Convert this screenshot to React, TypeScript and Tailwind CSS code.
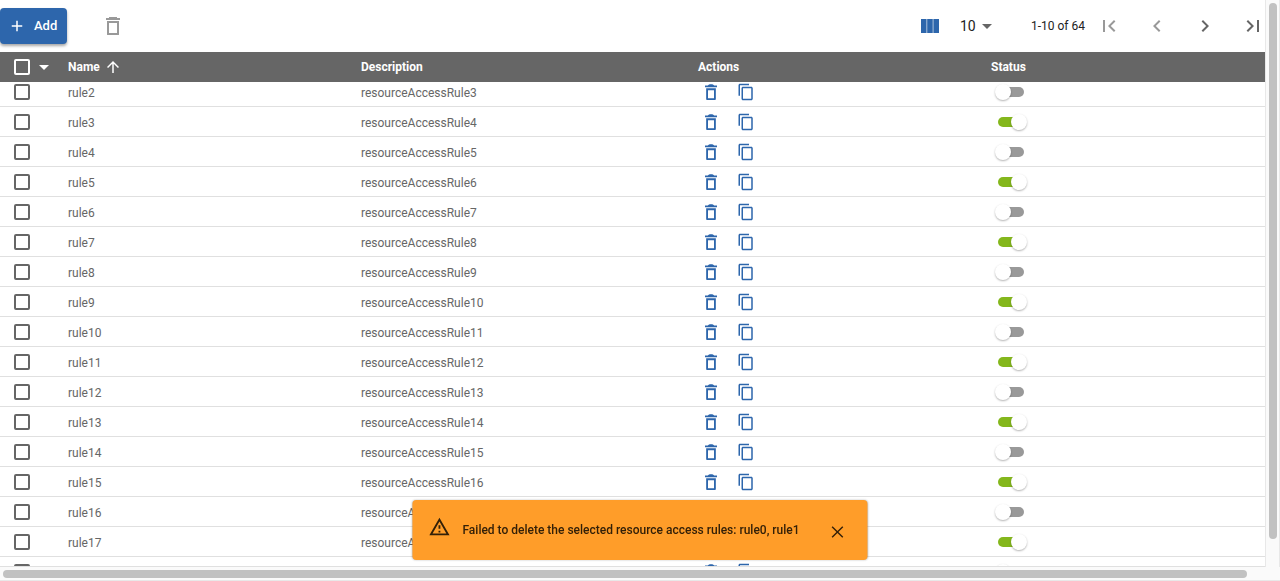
import { useLayoutEffect, useRef, useState } from "react";

const rules = Array.from({ length: 17 }, (_, i) => ({
  name: `rule${i + 2}`,
  description: `resourceAccessRule${i + 3}`,
  enabled: i % 2 === 1,
}));

function Icon({ d, className }: { d: string; className: string }) {
  return (
    <svg
      viewBox="0 0 24 24"
      fill="currentColor"
      fillRule="evenodd"
      aria-hidden="true"
      className={className}
    >
      <path d={d} />
    </svg>
  );
}

const icons = {
  add: "M19 13h-6v6h-2v-6H5v-2h6V5h2v6h6v2z",
  trash:
    "M6 20.4c0 .3.3.6.6.6h10.8c.3 0 .6-.3.6-.6V7H6zM8 9h8v10H8zM16 4V3H8v1H5v2h14V4z",
  trashSmall:
    "M6.2 7.6v12.8c0 .6.5 1.2 1.1 1.2h9.4c.6 0 1.1-.6 1.1-1.2V7.6zM8.4 9.8h7.2v9.6H8.4zM4.8 4.1h3.4C8.8 3.2 10.2 2.6 12 2.6s3.2.6 3.8 1.5h3.4v2.1H4.8z",
  copy: "M16 1H4c-1.1 0-2 .9-2 2v14h2V3h12V1zm3 4H8c-1.1 0-2 .9-2 2v14c0 1.1.9 2 2 2h11c1.1 0 2-.9 2-2V7c0-1.1-.9-2-2-2zm0 16H8V7h11v14z",
  arrowUp: "M4 12l1.41 1.41L11 7.83V20h2V7.83l5.58 5.59L20 12l-8-8-8 8z",
  caret: "M7 10l5 5 5-5z",
  first: "M18.41 16.59L13.82 12l4.59-4.59L17 6l-6 6 6 6zM6 6h2v12H6z",
  previous: "M15.41 7.41L14 6l-6 6 6 6 1.41-1.41L10.83 12z",
  next: "M10 6L8.59 7.41 13.17 12l-4.58 4.59L10 18l6-6z",
  last: "M5.59 7.41L10.18 12l-4.59 4.59L7 18l6-6-6-6zM16 6h2v12h-2z",
  warning:
    "M12 5.99L19.53 19H4.47L12 5.99M12 2L1 21h22L12 2zm1 14h-2v2h2v-2zm0-6h-2v4h2v-4z",
  close:
    "M19 6.2L17.8 5 12 10.8 6.2 5 5 6.2 10.8 12 5 17.8 6.2 19 12 13.2 17.8 19 19 17.8 13.2 12z",
};

function Toolbar() {
  return (
    <div className="flex h-[52px] shrink-0 items-center justify-between">
      <div className="flex items-center gap-[34px]">
        <button className="flex h-9 items-center gap-2 rounded bg-[#2d66ac] pr-[10px] pl-2 text-[13px] font-medium text-white shadow-[0_2px_3px_rgba(0,0,0,0.35)]">
          <Icon d={icons.add} className="size-[18px]" />
          Add
        </button>
        <button aria-label="Delete selected" className="text-[#999]">
          <Icon d={icons.trash} className="size-6" />
        </button>
      </div>
      <div className="flex items-center">
        <button aria-label="Choose columns" className="mr-5 text-[#2d66ac]">
          <svg viewBox="0 0 18 14" fill="currentColor" aria-hidden="true" className="h-[14px] w-[18px]">
            <path d="M0 0h5.3v14H0zM6.3 0h5.3v14H6.3zM12.6 0H18v14h-5.4z" />
            <path d="M0 0h18v14H0z" opacity=".4" />
          </svg>
        </button>
        <div className="relative mr-9 flex items-center">
          <select
            aria-label="Rows per page"
            defaultValue="10"
            className="w-9 appearance-none bg-transparent pl-[1px] text-sm text-[#222] outline-none"
          >
            <option>10</option>
            <option>25</option>
            <option>50</option>
          </select>
          <Icon d={icons.caret} className="pointer-events-none absolute -right-1 size-6 text-[#666]" />
        </div>
        <span className="mr-3 text-xs text-[#222]">1-10 of 64</span>
        <div className="flex items-center gap-6">
          <button aria-label="First page" className="text-[#999]">
            <Icon d={icons.first} className="size-6" />
          </button>
          <button aria-label="Previous page" className="text-[#999]">
            <Icon d={icons.previous} className="size-6" />
          </button>
          <button aria-label="Next page" className="text-[#666]">
            <Icon d={icons.next} className="size-6" />
          </button>
          <button aria-label="Last page" className="text-[#666]">
            <Icon d={icons.last} className="size-6" />
          </button>
        </div>
      </div>
    </div>
  );
}

const boxStyle =
  "block size-4 appearance-none rounded-[2px] border-2 border-[#666] checked:bg-[#2d66ac]";

function Switch({ name, initial }: { name: string; initial: boolean }) {
  const [on, setOn] = useState(initial);
  return (
    <input
      type="checkbox"
      role="switch"
      aria-label={`${name} enabled`}
      checked={on}
      onChange={() => setOn(!on)}
      className="ml-[7px] flex h-[10px] w-[26px] appearance-none items-center rounded-full bg-[#999] before:-ml-[3px] before:size-4 before:shrink-0 before:rounded-full before:bg-white before:shadow-[0_1px_2px_rgba(0,0,0,0.3)] checked:bg-[#84b71c] checked:before:ml-[13px]"
    />
  );
}

function RulesTable() {
  const scroller = useRef<HTMLDivElement>(null);
  useLayoutEffect(() => {
    if (scroller.current) scroller.current.scrollTop = 5;
  }, []);

  return (
    <div ref={scroller} className="min-h-0 flex-1 overflow-hidden">
      <table className="w-full table-fixed border-separate border-spacing-0 text-left text-xs">
        <colgroup>
          <col className="w-[68px]" />
          <col className="w-[293px]" />
          <col className="w-[337px]" />
          <col className="w-[293px]" />
          <col />
        </colgroup>
        <thead className="sticky top-0 z-10 bg-[#666] text-white">
          <tr className="h-[30px]">
            <th className="p-0 pl-[14px]">
              <div className="flex items-center gap-[2px]">
                <input
                  type="checkbox"
                  aria-label="Select all"
                  className="block size-4 appearance-none rounded-[2px] border-2 border-white"
                />
                <button aria-label="Selection options">
                  <Icon d={icons.caret} className="size-6" />
                </button>
              </div>
            </th>
            <th className="p-0 font-bold">
              <button className="flex items-center gap-1">
                Name
                <Icon d={icons.arrowUp} className="size-[18px]" />
              </button>
            </th>
            <th className="p-0 font-bold">Description</th>
            <th className="p-0 font-bold">Actions</th>
            <th className="p-0 font-bold">Status</th>
          </tr>
        </thead>
        <tbody className="text-[#666]">
          {rules.map((rule) => (
            <tr key={rule.name} className="h-[30px]">
              <td className="border-b border-[#e0e0e0] p-0 pl-[14px]">
                <input type="checkbox" aria-label={`Select ${rule.name}`} className={boxStyle} />
              </td>
              <td className="border-b border-[#e0e0e0] p-0 pt-[2px]">{rule.name}</td>
              <td className="border-b border-[#e0e0e0] p-0 pt-[2px]">{rule.description}</td>
              <td className="border-b border-[#e0e0e0] p-0">
                <div className="flex items-center gap-4 pl-[3px] text-[#2d66ac]">
                  <button aria-label={`Delete ${rule.name}`}>
                    <Icon d={icons.trashSmall} className="size-5" />
                  </button>
                  <button aria-label={`Copy ${rule.name}`}>
                    <Icon d={icons.copy} className="size-[18px]" />
                  </button>
                </div>
              </td>
              <td className="border-b border-[#e0e0e0] p-0">
                <Switch name={rule.name} initial={rule.enabled} />
              </td>
            </tr>
          ))}
        </tbody>
      </table>
    </div>
  );
}

function Toast() {
  const [open, setOpen] = useState(true);
  if (!open) return null;
  return (
    <div
      role="alert"
      className="fixed bottom-[21px] left-1/2 z-20 flex h-[60px] w-max -translate-x-1/2 items-center rounded bg-[#ff9d29] pr-5 pl-4 text-xs font-medium text-[#332008] shadow-[0_0_2px_rgba(0,0,0,0.3)]"
    >
      <Icon d={icons.warning} className="mr-3 mb-[6px] size-[22px]" />
      <span>Failed to delete the selected resource access rules: rule0, rule1</span>
      <button aria-label="Close" onClick={() => setOpen(false)} className="mt-1 ml-7">
        <Icon d={icons.close} className="size-5" />
      </button>
    </div>
  );
}

export default function App() {
  return (
    <div className="flex h-screen flex-col overflow-hidden bg-[#fafafa] font-['Roboto',sans-serif]">
      <div className="flex min-h-0 flex-1">
        <main className="flex min-w-0 flex-1 flex-col border-b border-[#e0e0e0] bg-white">
          <Toolbar />
          <RulesTable />
        </main>
        <div className="flex w-[15px] justify-center border-x border-[#e8e8e8] pt-[3px]">
          <div className="h-[95%] w-2 rounded-full bg-[#c1c1c1]" />
        </div>
      </div>
      <div className="flex h-[14px] shrink-0 items-center border-b border-[#e8e8e8] pl-[3px]">
        <div className="h-2 w-[97.4%] rounded-full bg-[#c1c1c1]" />
      </div>
      <Toast />
    </div>
  );
}
